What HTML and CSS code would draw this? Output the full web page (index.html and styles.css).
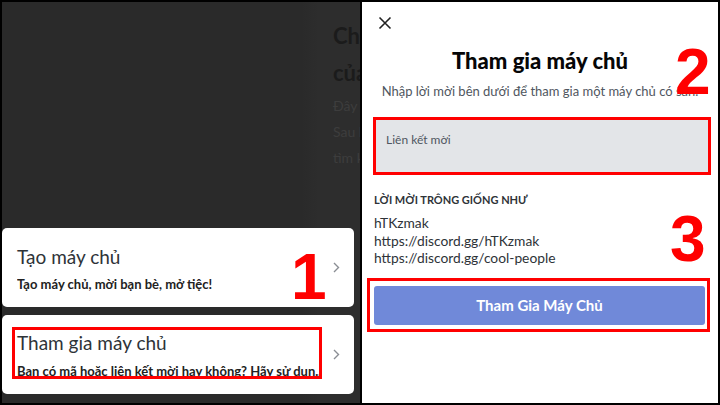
FILE: index.html
```html
<!DOCTYPE html>
<html lang="vi">

<head>
    <meta charset="utf-8">
    <meta name="viewport" content="width=device-width, initial-scale=1.0">
    <title>Tham gia máy chủ</title>

    <link rel="stylesheet" href="styles.css">

</head>

<body>
    <div class="screen">

        <!-- step 1: bottom sheet over the dimmed page -->
        <section class="phone phone-sheet">
            <div class="backdrop">
                <div class="backdrop-title">Chào mừng đến với máy chủ</div>
                <div class="backdrop-title">của bạn</div>
                <div class="backdrop-text">Đây là nơi bạn và bạn bè gặp nhau.</div>
                <div class="backdrop-text">Sau khi tạo máy chủ, hãy mời bạn bè</div>
                <div class="backdrop-text">tìm kiếm cộng đồng của bạn.</div>
            </div>

            <div class="sheet">
                <div class="option option-create">
                    <div class="option-text">
                        <div class="option-title">Tạo máy chủ</div>
                        <div class="option-desc">Tạo máy chủ, mời bạn bè, mở tiệc!</div>
                    </div>
                    <svg class="chevron" width="7" height="11" viewBox="0 0 7 11">
                        <path d="M1 1l4.5 4.5L1 10" fill="none" stroke="#8a8e94" stroke-width="1.4" />
                    </svg>
                </div>
                <div class="option option-join">
                    <div class="option-text">
                        <div class="option-title">Tham gia máy chủ</div>
                        <div class="option-desc">Bạn có mã hoặc liên kết mời hay không? Hãy sử dụn..</div>
                    </div>
                    <svg class="chevron" width="7" height="11" viewBox="0 0 7 11">
                        <path d="M1 1l4.5 4.5L1 10" fill="none" stroke="#8a8e94" stroke-width="1.4" />
                    </svg>
                    <div class="mark mark-option"></div>
                </div>
            </div>

            <span class="step step-1">1</span>
        </section>

        <!-- step 2 + 3: join dialog -->
        <section class="phone phone-join">
            <div class="modal-top">
                <svg class="close" width="14" height="14" viewBox="0 0 14 14">
                    <path d="M1.5 1.5l11 11M12.5 1.5l-11 11" stroke="#222" stroke-width="1.6" />
                </svg>
            </div>

            <h1 class="modal-title">Tham gia máy chủ</h1>
            <p class="modal-sub">Nhập lời mời bên dưới để tham gia một máy chủ có sẵn.</p>

            <div class="mark-box mark-input">
                <div class="invite-input">Liên kết mời</div>
            </div>

            <div class="examples">
                <div class="examples-label">Lời mời trông giống như</div>
                <div class="examples-list">
                    <div>hTKzmak</div>
                    <div>https://discord.gg/hTKzmak</div>
                    <div>https://discord.gg/cool-people</div>
                </div>
            </div>

            <div class="mark-box mark-button">
                <button class="join-button">Tham Gia Máy Chủ</button>
            </div>

            <span class="step step-2">2</span>
            <span class="step step-3">3</span>
        </section>

    </div>
</body>

</html>
```

FILE: styles.css
```css
html {
    font-family: 'Lato', 'Noto Sans', sans-serif;
}

body {
    margin: 0;
    background: #000;
}

.screen {
    display: flex;
    width: 720px;
    height: 405px;
    box-sizing: border-box;
    border: 2px solid #000;
}

.phone {
    position: relative;
    overflow: hidden;
}

/* ---- left phone ---- */

.phone-sheet {
    width: 358px;
    display: flex;
    flex-direction: column;
    background: linear-gradient(to right, #2a2a2a 300px, #2d2d2d 316px);
}

.backdrop {
    padding: 15px 0 0 331px;
    white-space: nowrap;
}

.backdrop-title {
    font-size: 22px;
    line-height: 37px;
    font-weight: bold;
    color: #1b1b1b;
}

.backdrop-text {
    font-size: 14px;
    line-height: 26px;
    color: #3d3d3d;
}

.backdrop-title + .backdrop-text {
    margin-top: 2px;
}

.sheet {
    margin-top: auto;
    padding: 0 6px 9px 0;
    display: flex;
    flex-direction: column;
    gap: 8px;
}

.option {
    position: relative;
    height: 79px;
    box-sizing: border-box;
    display: flex;
    align-items: center;
    background: #fff;
    border-radius: 5px;
    padding: 0 14px 0 15px;
}

.option-text {
    flex: 1;
    min-width: 0;
    align-self: flex-start;
}

.option-title {
    font-size: 19px;
    line-height: 23px;
    color: #2e3338;
    white-space: nowrap;
}

.option-desc {
    font-size: 13px;
    line-height: 16px;
    font-weight: bold;
    color: #222;
    white-space: nowrap;
    overflow: hidden;
}

.option-create .option-text {
    padding-top: 17px;
}

.option-create .option-desc {
    margin-top: 8px;
}

.option-join .option-text {
    padding-top: 16px;
}

.option-join .option-desc {
    margin-top: 9px;
}

.chevron {
    flex-shrink: 0;
}

/* red highlight frames */
.mark {
    position: absolute;
    border: 3px solid #f00;
    box-sizing: border-box;
}

.mark-option {
    left: 10px;
    top: 12px;
    width: 310px;
    height: 52px;
}

.step {
    position: absolute;
    font-family: 'Liberation Sans', Arial, sans-serif;
    font-weight: bold;
    font-size: 64px;
    line-height: 64px;
    color: #f00;
}

.step-1 {
    left: 289px;
    top: 243px;
}

/* ---- right phone ---- */

.phone-join {
    flex: 1;
    background: #fff;
    border-left: 2px solid #000;
}

.modal-top {
    padding: 14px 0 0 16px;
    height: 14px;
}

.close {
    display: block;
}

.modal-title {
    margin: 17px 0 0;
    text-align: center;
    font-size: 22px;
    line-height: 28px;
    font-weight: 900;
    color: #060607;
}

.modal-sub {
    margin: 7px 0 0;
    text-align: center;
    font-size: 13px;
    line-height: 18px;
    color: #4f5660;
    white-space: nowrap;
}

.mark-box {
    border: 3px solid #f00;
}

.mark-input {
    margin: 17px 7px 0 11px;
}

.invite-input {
    height: 52px;
    box-sizing: border-box;
    padding: 12px 10px 0;
    background: #e3e5e8;
    font-size: 12px;
    line-height: 15px;
    color: #4f5660;
}

.examples {
    margin: 18px 12px 0;
}

.examples-label {
    font-size: 11px;
    line-height: 14px;
    font-weight: bold;
    text-transform: uppercase;
    color: #2e3338;
}

.examples-list {
    margin-top: 7px;
    font-size: 13.8px;
    line-height: 17.5px;
    color: #2e3338;
}

.mark-button {
    margin: 11px 8px 0 5px;
    padding: 5px 2px 4px 4px;
}

.join-button {
    display: block;
    width: 100%;
    height: 39px;
    border: none;
    border-radius: 3px;
    background: #7089d9;
    color: #fff;
    font-family: inherit;
    font-size: 15px;
    font-weight: bold;
    cursor: pointer;
}

.step-2 {
    left: 313px;
    top: 38px;
}

.step-3 {
    left: 308px;
    top: 205px;
}
```
